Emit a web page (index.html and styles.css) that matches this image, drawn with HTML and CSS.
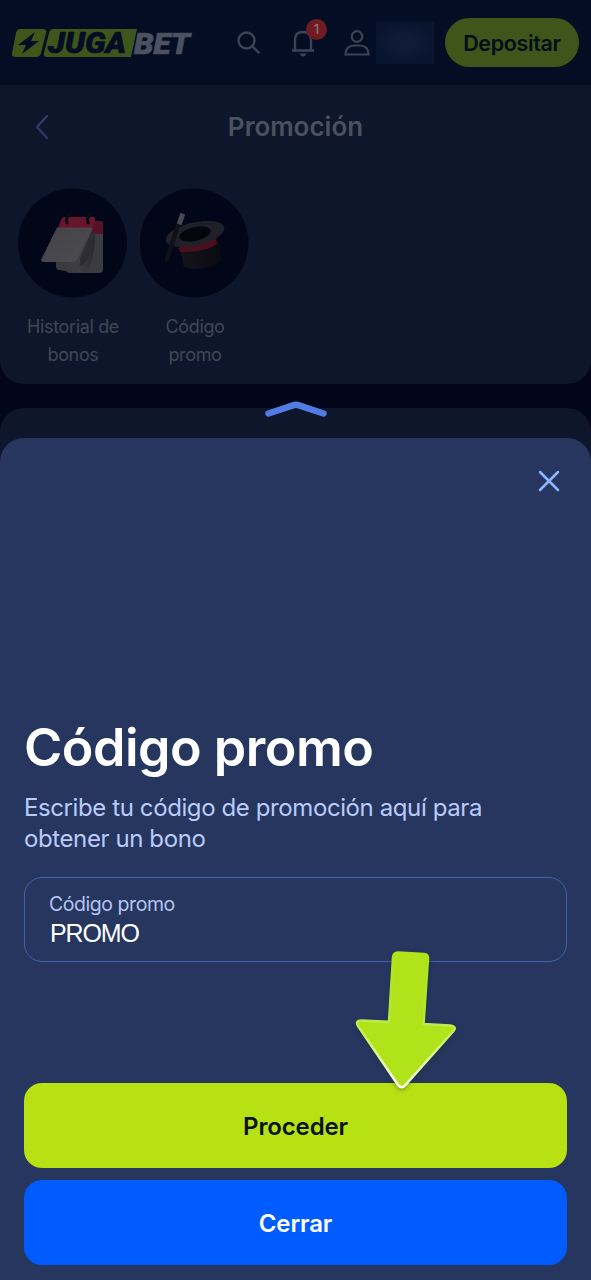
FILE: index.html
```html
<!DOCTYPE html>
<html lang="es">
<head>
<meta charset="utf-8">
<meta name="viewport" content="width=device-width, initial-scale=1">
<title>Código promo</title>
<link rel="stylesheet" href="styles.css">
</head>
<body>
<div class="screen">
  <header class="topbar">
    <svg class="logo" width="184" height="40" viewBox="0 -5 184 40" role="img" aria-label="JugaBet">
      <path class="logo-plate" d="M8 1h23q4 0 3 4l-5 20q-1 4-5 4H4q-5 0-4-4L4 5q1-4 4-4z"/>
      <path class="logo-plate" d="M41 1h84l-6 28H35q-4 0-3-4l5-20q1-4 4-4z"/>
      <path class="logo-bolt" d="M23 4L6 17h8l-4 9 17-13h-8z"/>
      <text class="logo-juga" x="36" y="25" textLength="78" lengthAdjust="spacingAndGlyphs">JUGA</text>
      <text class="logo-bet" x="122" y="25.500" textLength="56" lengthAdjust="spacingAndGlyphs">BET</text>
    </svg>
    <svg class="icon-search" width="26" height="26" viewBox="0 0 26 26"><circle cx="10.500" cy="10.500" r="8"/><path d="M16.500 16.500l7 7"/></svg>
    <div class="bell">
      <svg width="26" height="30" viewBox="0 0 26 30"><path d="M2 22.500h22M5 22V12q0-8 8-8t8 8v10"/><path class="clapper" d="M9.500 25.500h7q-1 3-3.500 3t-3.500-3z"/></svg>
      <span class="badge">1</span>
    </div>
    <svg class="icon-user" width="28" height="28" viewBox="0 0 28 28"><circle cx="14" cy="7.500" r="5.300"/><path d="M2.500 25.500q0-9 9-9h5q9 0 9 9z"/></svg>
    <span class="balance"></span>
    <button class="deposit">Depositar</button>
  </header>

  <section class="panel">
    <div class="panel-head">
      <svg class="back" width="16" height="26" viewBox="0 0 16 26"><path d="M13 2L3 13l10 11"/></svg>
      <h1 class="panel-title">Promoción</h1>
    </div>
    <nav class="tiles">
      <a class="tile">
        <svg class="tile-art" width="110" height="110" viewBox="0 0 110 110">
          <defs>
            <linearGradient id="pages" x1="0" x2="1"><stop offset="0" stop-color="#38383e"/><stop offset=".6" stop-color="#3e3e44"/><stop offset="1" stop-color="#29292f"/></linearGradient>
            <linearGradient id="paper" x1="0" y1="0" x2="1" y2="1"><stop offset="0" stop-color="#424247"/><stop offset="1" stop-color="#4c4c51"/></linearGradient>
          </defs>
          <circle class="disc" cx="54.500" cy="55" r="54.500"/>
          <path d="M72 33h10q3 0 3 3v45q0 4-4 4H52q-3 0-4-2l-7-1q-3 0-3-4V70z" fill="#3b3b41"/>
          <path d="M74 33h8q3 0 3 3v10H74z" fill="#561225"/>
          <path d="M74 43l3 4q0 18-5 31-2 5-7 6H52l-3-2-8-1q-3 0-3-3v-6z" fill="url(#pages)"/>
          <path d="M74 43q2 16-6 31-2 4-7 4 2-2 1-7z" fill="#2d2d33"/>
          <path d="M46 29h29q3 0 2 4l-3 9H39l4-10q1-3 3-3z" fill="#66152b"/>
          <path d="M39 39.500h34q2 0 1 3L60 70q-2 4-6 4H25q-3 0-1-4z" fill="url(#paper)"/>
          <path d="M49 35q-2-8 5-10M70 35q-2-8 5-10" class="ring"/>
        </svg>
        <span class="tile-label">Historial de<br>bonos</span>
      </a>
      <a class="tile">
        <svg class="tile-art" width="110" height="110" viewBox="0 0 110 110">
          <defs><linearGradient id="hat" x1="0" x2="1"><stop offset="0" stop-color="#14141a"/><stop offset="1" stop-color="#090a13"/></linearGradient></defs>
          <circle class="disc" cx="54" cy="55" r="54.500"/>
          <path d="M40 59l4 20q18 6 38-6l-4-24z" fill="url(#hat)"/>
          <path d="M38 60l2 4q24 1 37-8l-2-8z" fill="#490f20"/>
          <ellipse cx="55" cy="46" rx="30" ry="11.500" transform="rotate(-13 55 46)" fill="#202128"/>
          <ellipse cx="55" cy="46" rx="16" ry="7" transform="rotate(-13 55 46)" fill="#05060d"/>
          <path d="M27 71l12-36" stroke="#101118" stroke-width="4.500" stroke-linecap="round"/>
          <path d="M40 34l2-6" stroke="#484951" stroke-width="5" stroke-linecap="square"/>
        </svg>
        <span class="tile-label">Código<br>promo</span>
      </a>
    </nav>
  </section>
  <section class="panel-next"></section>

  <main class="sheet">
    <svg class="handle" width="64" height="18" viewBox="0 0 64 18"><path d="M4.500 12.500L29 4.300q3-1 6 0l24.500 8.200"/></svg>
    <button class="close" aria-label="Cerrar"><svg width="24" height="24" viewBox="0 0 24 24"><path d="M3 3l18 18M21 3L3 21"/></svg></button>
    <h2 class="sheet-title">Código promo</h2>
    <p class="sheet-text">Escribe tu código de promoción aquí para<br>obtener un bono</p>
    <div class="field">
      <span class="field-label">Código promo</span>
      <span class="field-value">PROMO</span>
    </div>
    <div class="actions">
      <button class="action proceed">Proceder</button>
      <button class="action dismiss">Cerrar</button>
    </div>
    <svg class="pointer" width="112" height="150" viewBox="350 945 112 150">
      <defs><linearGradient id="edge" x1="0" y1="0" x2="0" y2="1"><stop offset="0" stop-color="#b1e31a"/><stop offset=".45" stop-color="#b5e43a"/><stop offset=".7" stop-color="#d4f37d"/><stop offset="1" stop-color="#fff"/></linearGradient></defs>
      <path d="M398 952.500l26 1.500q4.500.500 4 5l-4.500 65 27 1.500q6.500 1 3 5.500l-48 54q-4 4.500-7.500 0l-40-59q-3-5.500 3-5.500l28 1.300 4-64.300q.500-5 5-5z" fill="#b1e31a" stroke="url(#edge)" stroke-width="2.500" stroke-linejoin="round"/>
    </svg>
  </main>
</div>
</body>
</html>
```

FILE: styles.css
```css
* { box-sizing: border-box; }
body { margin: 0; background: #03061a; font-family: Inter, "Liberation Sans", sans-serif; }
button { border: 0; padding: 0; font: inherit; }
svg { display: block; fill: none; flex: none; }
.screen { position: relative; width: 591px; height: 1280px; overflow: hidden; }

.topbar { display: flex; align-items: center; height: 85px; padding: 0 12px; background: #030d24; }
.logo { overflow: visible; }
.logo-plate { fill: #3f561a; }
.logo-bolt { fill: #030d24; }
.logo-juga, .logo-bet { font-family: Roboto, sans-serif; font-weight: 900; font-style: italic; font-size: 29px; stroke-width: .7; }
.logo-juga { fill: #030d24; stroke: #030d24; }
.logo-bet { fill: #4c5260; stroke: #4c5260; }
.icon-search { margin-left: 40px; stroke: #3b4356; stroke-width: 2.4; }
.bell { position: relative; margin-left: 28px; stroke: #3b4356; stroke-width: 2.4; }
.clapper { fill: #3b4356; stroke: none; }
.badge { position: absolute; left: 16px; top: -9px; width: 21px; height: 21px; border-radius: 50%; background: #701b22; color: #8c7475; font-size: 13px; font-weight: 500; line-height: 21px; text-align: center; }
.icon-user { margin-left: 27px; stroke: #3b4356; stroke-width: 2.2; }
.balance { width: 58px; height: 42px; margin-left: 5px; background: radial-gradient(ellipse, #111d3b 0%, #09152f 75%); }
.deposit { width: 134px; height: 49px; margin-left: 11px; border-radius: 25px; background: #3f561a; color: #030d19; font-size: 21.5px; font-weight: 600; letter-spacing: -.35px; }

.panel { height: 299px; border-radius: 0 0 24px 24px; background: #0d162b; }
.panel-head { display: grid; grid-template-columns: 16px 1fr 16px; align-items: center; padding: 24px 34px 0; height: 60px; }
.back { stroke: #293b66; stroke-width: 2.4; stroke-linecap: round; stroke-linejoin: round; }
.panel-title { margin: 0; text-align: center; color: #4c515d; font-size: 26px; font-weight: 600; line-height: 36px; }
.tiles { display: flex; gap: 12px; padding: 43px 18px 0; }
.tile { width: 110px; display: flex; flex-direction: column; }
.disc { fill: #020619; }
.ring { stroke: #080a15; stroke-width: 3; stroke-linecap: round; }
.tile-label { margin-top: 15px; text-align: center; color: #414753; font-size: 18px; line-height: 28px; letter-spacing: -.35px; }
.panel-next { height: 100px; margin-top: 24px; border-radius: 24px 24px 0 0; background: #0d162b; }

.sheet { position: absolute; left: 0; right: 0; top: 438px; height: 842px; display: flex; flex-direction: column; padding: 31px 24px 15px; border-radius: 24px 24px 0 0; background: #26365f; }
.handle { position: absolute; left: 263.5px; top: -37px; stroke: #507ce4; stroke-width: 6.5; stroke-linecap: round; stroke-linejoin: round; }
.close { align-self: flex-end; margin-right: 6px; background: none; stroke: #8cb6ff; stroke-width: 2.5; stroke-linecap: round; }
.sheet-title { margin: 225px 0 0; color: #fff; font-size: 52px; font-weight: 600; line-height: 60px; letter-spacing: -.5px; }
.sheet-text { margin: 14px 0 0; color: #b9cbfb; font-size: 24px; line-height: 31px; letter-spacing: -.4px; white-space: nowrap; }
.field { display: flex; flex-direction: column; height: 85px; margin-top: 23px; padding: 14px 24px; border: 1.5px solid #4263ab; border-radius: 18px; }
.field-label { color: #b4c4f2; font-size: 19.5px; line-height: 24px; letter-spacing: -.45px; }
.field-value { padding: 1px 0 0 1px; color: #fff; font-family: "Liberation Sans", sans-serif; font-size: 25px; line-height: 33px; letter-spacing: -1.1px; }
.actions { display: flex; flex-direction: column; gap: 12px; margin-top: auto; }
.action { height: 85px; padding-top: 1px; border-radius: 18px; font-size: 24px; font-weight: 600; letter-spacing: -.15px; }
.proceed { background: #b7e112; color: #08141c; }
.dismiss { background: #005cff; color: #fff; }
.pointer { position: absolute; left: 350px; top: 507px; filter: drop-shadow(0 2px 2px rgba(30, 50, 20, .35)); }
```
